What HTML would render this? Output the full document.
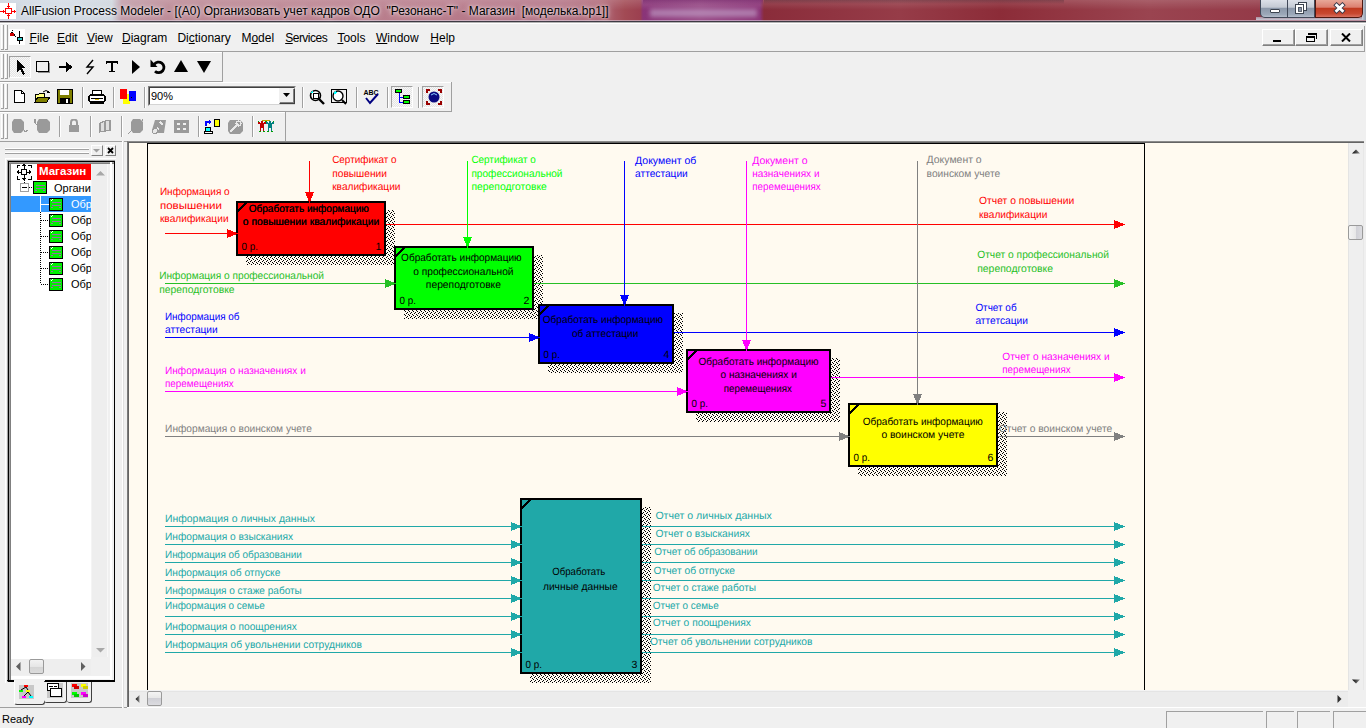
<!DOCTYPE html>
<html><head><meta charset="utf-8">
<style>
html,body{margin:0;padding:0;}
body{width:1366px;height:728px;overflow:hidden;position:relative;background:#F0F0F0;font-family:"Liberation Sans",sans-serif;font-size:12px;color:#000;}
.a{position:absolute;}
.t{position:absolute;white-space:nowrap;line-height:1;}
</style></head><body>
<div class="a" style="left:0px;top:0px;width:1366px;height:22px;background:linear-gradient(90deg,#CCD5DF 0px,#D4DCE6 60px,#CFD6DE 112px,#C09AA6 122px,#BC8894 180px,#BA808E 340px,#B47486 560px,#B06878 600px,#A24A54 625px,#9C4050 640px,#8A3478 643px,#984A86 700px,#8C3478 760px,#8A2C3A 764px,#963C48 900px,#8C2C38 1000px,#9A4450 1150px,#8E3040 1366px);"></div>
<div class="a" style="left:0px;top:0px;width:1366px;height:10px;background:linear-gradient(180deg,rgba(255,255,255,0.15),rgba(255,255,255,0));"></div>
<div class="a" style="left:643px;top:0px;width:120px;height:5px;background:linear-gradient(180deg,rgba(110,30,100,0.5),rgba(110,30,100,0));"></div>
<div class="a" style="left:764px;top:0px;width:300px;height:4px;background:linear-gradient(180deg,rgba(30,20,30,0.25),rgba(30,20,30,0));"></div>
<div class="a" style="left:650px;top:9px;width:107px;height:8px;background:rgba(200,175,210,0.55);filter:blur(2px);"></div>
<div class="a" style="left:0px;top:20px;width:1366px;height:1px;background:rgba(225,220,235,0.55);"></div>
<div class="a" style="left:0px;top:21px;width:1366px;height:1px;background:#3E3A44;"></div>
<div class="a" style="left:0px;top:3px;width:16px;height:16px;background:#fff;"></div>
<svg class="a" style="left:0px;top:3px" width="16" height="16" viewBox="0 0 16 16" shape-rendering="crispEdges"><rect x="5.5" y="5.5" width="6" height="5" fill="none" stroke="#F00" stroke-width="1"/><path d="M8.5 0 V5 M8.5 11 V16 M0 8.5 H5 M12 8.5 H16" stroke="#F00" stroke-width="1"/><path d="M7 3.5 H10 M7 12.5 H10 M3.5 7 V10 M14.5 7 V10" stroke="#F00" stroke-width="1"/></svg>
<div class="t" style="left:21px;top:5px;font-size:12px;color:#000;text-shadow:0 0 6px rgba(255,255,255,0.9),0 0 3px rgba(255,255,255,0.8);">AllFusion Process Modeler - [(A0) Организовать учет кадров ОДО&nbsp; "Резонанс-Т" - Магазин&nbsp; [моделька.bp1]]</div>
<div class="a" style="left:1256px;top:17px;width:110px;height:3px;background:linear-gradient(180deg,rgba(190,200,215,0.6),rgba(205,215,228,0.9));"></div>
<div class="a" style="left:1362px;top:0px;width:4px;height:20px;background:linear-gradient(90deg,#C8D0DC,#8A98A8);"></div>
<div class="a" style="left:1260px;top:0px;width:28px;height:18px;box-sizing:border-box;border:1px solid #404858;border-top:none;border-radius:0 0 0 5px;background:linear-gradient(180deg,#DCE0E8 0%,#C4CAD4 42%,#8C98AA 50%,#9CA8B8 85%,#B4BECC 100%);"></div>
<div class="a" style="left:1288px;top:0px;width:27px;height:18px;box-sizing:border-box;border:1px solid #404858;border-top:none;border-left:none;background:linear-gradient(180deg,#DCE0E8 0%,#C4CAD4 42%,#8C98AA 50%,#9CA8B8 85%,#B4BECC 100%);"></div>
<div class="a" style="left:1315px;top:0px;width:48px;height:18px;box-sizing:border-box;border:1px solid #501810;border-top:none;border-radius:0 0 5px 0;background:linear-gradient(180deg,#E8A898 0%,#DC8070 42%,#C03A20 50%,#C84830 80%,#D87060 100%);"></div>
<div class="a" style="left:1270px;top:9px;width:10px;height:4px;background:#fff;border:1px solid #3C4450;box-sizing:border-box;border-radius:1px;"></div>
<svg class="a" style="left:1294px;top:1px" width="14" height="13" viewBox="0 0 14 13" shape-rendering="crispEdges"><rect x="4.5" y="1.5" width="8" height="8" fill="#fff" stroke="#3C4450" shape-rendering="auto"/><rect x="1.5" y="3.5" width="8" height="9" fill="#fff" stroke="#3C4450" shape-rendering="auto"/><rect x="4" y="6" width="3" height="4" fill="#8A96A8" stroke="#3C4450" stroke-width="0.8"/></svg>
<svg class="a" style="left:1333px;top:2px" width="13" height="12" viewBox="0 0 13 12" shape-rendering="crispEdges"><path d="M3.6 3.2 L9.4 8.8 M9.4 3.2 L3.6 8.8" stroke="#3A3848" stroke-width="4.6" stroke-linecap="square" shape-rendering="auto"/><path d="M3.6 3.2 L9.4 8.8 M9.4 3.2 L3.6 8.8" stroke="#fff" stroke-width="2.8" stroke-linecap="square" shape-rendering="auto"/></svg>
<div class="a" style="left:0px;top:22px;width:1366px;height:30px;background:#F0F0F0;"></div>
<div class="a" style="left:0px;top:22px;width:1366px;height:1px;background:#B4B4B4;"></div>
<div class="a" style="left:0px;top:23px;width:1366px;height:1px;background:#FFFFFF;"></div>
<div class="a" style="left:0px;top:51px;width:1365px;height:1px;background:#A0A0A0;"></div>
<div class="a" style="left:1364px;top:26px;width:1px;height:25px;background:#A0A0A0;"></div>
<div class="a" style="left:1px;top:25px;width:1px;height:25px;background:#fff;"></div><div class="a" style="left:3px;top:25px;width:1px;height:25px;background:#A0A0A0;"></div><div class="a" style="left:1px;top:49px;width:3px;height:1px;background:#A0A0A0;"></div><div class="a" style="left:5px;top:25px;width:1px;height:25px;background:#fff;"></div><div class="a" style="left:7px;top:25px;width:1px;height:25px;background:#A0A0A0;"></div><div class="a" style="left:5px;top:49px;width:3px;height:1px;background:#A0A0A0;"></div>
<svg class="a" style="left:9px;top:29px" width="16" height="16" shape-rendering="crispEdges"><rect x="0" y="0" width="16" height="16" fill="#fff"/><rect x="1" y="4" width="4" height="3" fill="#C00"/><rect x="2" y="3" width="2" height="1" fill="#000"/><rect x="3" y="1" width="1" height="1" fill="#000"/><rect x="5" y="5" width="1" height="2" fill="#000"/><rect x="6" y="7" width="1" height="1" fill="#000"/><rect x="10" y="2" width="1" height="13" fill="#000"/><rect x="8" y="8" width="5" height="3" fill="#33CCCC" stroke="#000" stroke-width="1"/></svg>
<div class="t" style="left:29.6px;top:32px;font-size:12px;"><u>F</u>ile</div>
<div class="t" style="left:57px;top:32px;font-size:12px;"><u>E</u>dit</div>
<div class="t" style="left:86.9px;top:32px;font-size:12px;"><u>V</u>iew</div>
<div class="t" style="left:122px;top:32px;font-size:12px;"><u>D</u>iagram</div>
<div class="t" style="left:177.4px;top:32px;font-size:12px;">Di<u>c</u>tionary</div>
<div class="t" style="left:241.4px;top:32px;font-size:12px;">M<u>o</u>del</div>
<div class="t" style="left:285.2px;top:32px;font-size:12px;"><span style="letter-spacing:-0.5px"><u>S</u>ervices</span></div>
<div class="t" style="left:337.4px;top:32px;font-size:12px;"><u>T</u>ools</div>
<div class="t" style="left:376px;top:32px;font-size:12px;"><u>W</u>indow</div>
<div class="t" style="left:430.3px;top:32px;font-size:12px;"><u>H</u>elp</div>
<div class="a" style="left:1262px;top:29px;width:33px;height:17px;box-sizing:border-box;border:1px solid;border-color:#fff #808080 #808080 #fff;background:#F0F0F0;box-shadow:inset -1px -1px 0 #A0A0A0;"></div>
<div class="a" style="left:1295px;top:29px;width:33px;height:17px;box-sizing:border-box;border:1px solid;border-color:#fff #808080 #808080 #fff;background:#F0F0F0;box-shadow:inset -1px -1px 0 #A0A0A0;"></div>
<div class="a" style="left:1330px;top:29px;width:33px;height:17px;box-sizing:border-box;border:1px solid;border-color:#fff #808080 #808080 #fff;background:#F0F0F0;box-shadow:inset -1px -1px 0 #A0A0A0;"></div>
<div class="a" style="left:1273px;top:40px;width:8px;height:2px;background:#000;"></div>
<div class="a" style="left:1306px;top:36px;width:9px;height:6px;box-sizing:border-box;border:1px solid #000;border-top-width:2px;background:#F0F0F0;"></div>
<div class="a" style="left:1308px;top:33px;width:9px;height:6px;box-sizing:border-box;border:1px solid #000;border-top-width:2px;border-left:none;border-bottom:none;"></div>
<svg class="a" style="left:1341px;top:33px" width="10" height="9"><path d="M1 0.5 L9 8.5 M9 0.5 L1 8.5" stroke="#000" stroke-width="2"/></svg>
<div class="a" style="left:0px;top:52px;width:222px;height:1px;background:#fff;"></div>
<div class="a" style="left:0px;top:81px;width:223px;height:1px;background:#A0A0A0;"></div>
<div class="a" style="left:0px;top:82px;width:451px;height:1px;background:#fff;"></div>
<div class="a" style="left:0px;top:111px;width:452px;height:1px;background:#A0A0A0;"></div>
<div class="a" style="left:0px;top:112px;width:285px;height:1px;background:#fff;"></div>
<div class="a" style="left:222px;top:52px;width:1px;height:30px;background:#A0A0A0;"></div>
<div class="a" style="left:1px;top:54px;width:1px;height:25px;background:#fff;"></div><div class="a" style="left:3px;top:54px;width:1px;height:25px;background:#A0A0A0;"></div><div class="a" style="left:1px;top:78px;width:3px;height:1px;background:#A0A0A0;"></div><div class="a" style="left:5px;top:54px;width:1px;height:25px;background:#fff;"></div><div class="a" style="left:7px;top:54px;width:1px;height:25px;background:#A0A0A0;"></div><div class="a" style="left:5px;top:78px;width:3px;height:1px;background:#A0A0A0;"></div>
<div class="a" style="left:9px;top:56px;width:22px;height:22px;box-sizing:border-box;border:1px solid;border-color:#A0A0A0 #fff #fff #A0A0A0;background:repeating-conic-gradient(#F8F8F8 0 25%,#E4E4E4 0 50%) 0 0/2px 2px;"></div>
<svg class="a" style="left:16px;top:60px" width="12" height="16" viewBox="0 0 12 16" shape-rendering="crispEdges"><path d="M1 0 L1 12 L4 9 L7 15 L9 14 L6 8 L10 8 Z" fill="#000"/></svg>
<svg class="a" style="left:35px;top:60px" width="16" height="14" viewBox="0 0 16 14" shape-rendering="crispEdges"><rect x="1.5" y="1.5" width="12" height="10" fill="none" stroke="#000" stroke-width="1.6"/><rect x="3" y="12" width="12" height="1" fill="#909090"/><rect x="14" y="3" width="1" height="10" fill="#909090"/></svg>
<svg class="a" style="left:58px;top:62px" width="16" height="10" viewBox="0 0 16 10" shape-rendering="crispEdges"><rect x="1" y="4" width="10" height="2" fill="#000"/><path d="M8 0 L15 5 L8 10 Z" fill="#000"/></svg>
<svg class="a" style="left:84px;top:59px" width="12" height="16" viewBox="0 0 12 16" shape-rendering="crispEdges"><path d="M9 1 L3 8 L9 8 L3 15" fill="none" stroke="#000" stroke-width="1.4" shape-rendering="auto"/></svg>
<svg class="a" style="left:105px;top:60px" width="14" height="13" viewBox="0 0 14 13" shape-rendering="crispEdges"><path d="M1 1 H13 V4 H12 V3 H8 V11 H10 V12 H4 V11 H6 V3 H2 V4 H1 Z" fill="#000"/></svg>
<svg class="a" style="left:130px;top:59px" width="12" height="16" viewBox="0 0 12 16" shape-rendering="crispEdges"><path d="M2 1 L10 8 L2 15 Z" fill="#000" shape-rendering="auto"/></svg>
<svg class="a" style="left:149px;top:58px" width="18" height="18" viewBox="0 0 18 18" shape-rendering="crispEdges"><path d="M5.2 6.5 A5.3 5.3 0 1 1 6 13.2" fill="none" stroke="#000" stroke-width="2.8" shape-rendering="auto"/><path d="M1.5 1.5 L1.5 9 L8.5 9 Z" fill="#000" shape-rendering="auto"/></svg>
<svg class="a" style="left:174px;top:60px" width="14" height="13" viewBox="0 0 14 13" shape-rendering="crispEdges"><path d="M7 0 L14 12 L0 12 Z" fill="#000" shape-rendering="auto"/></svg>
<svg class="a" style="left:197px;top:60px" width="14" height="13" viewBox="0 0 14 13" shape-rendering="crispEdges"><path d="M0 1 L14 1 L7 13 Z" fill="#000" shape-rendering="auto"/></svg>
<div class="a" style="left:451px;top:82px;width:1px;height:30px;background:#A0A0A0;"></div>
<div class="a" style="left:1px;top:84px;width:1px;height:25px;background:#fff;"></div><div class="a" style="left:3px;top:84px;width:1px;height:25px;background:#A0A0A0;"></div><div class="a" style="left:1px;top:108px;width:3px;height:1px;background:#A0A0A0;"></div><div class="a" style="left:5px;top:84px;width:1px;height:25px;background:#fff;"></div><div class="a" style="left:7px;top:84px;width:1px;height:25px;background:#A0A0A0;"></div><div class="a" style="left:5px;top:108px;width:3px;height:1px;background:#A0A0A0;"></div>
<svg class="a" style="left:13px;top:89px" width="14" height="16" viewBox="0 0 14 16" shape-rendering="crispEdges"><path d="M1.5 1.5 H8.5 L11.5 4.5 V13.5 H1.5 Z" fill="#fff" stroke="#000" stroke-width="1.2"/><path d="M8.5 1.5 V4.5 H11.5" fill="none" stroke="#000"/></svg>
<svg class="a" style="left:34px;top:89px" width="18" height="16" viewBox="0 0 18 16" shape-rendering="crispEdges"><path d="M1 5 H5 L6 4 H10 V13 H1 Z" fill="#FFFF80" stroke="#000"/><path d="M1 13 L4 8 H16 L13 13 Z" fill="#808000" stroke="#000"/><path d="M9 3 Q12 0 15 3" fill="none" stroke="#000" shape-rendering="auto"/><path d="M14 1 L16 4 L13 4Z" fill="#000"/></svg>
<svg class="a" style="left:57px;top:89px" width="16" height="16" viewBox="0 0 16 16" shape-rendering="crispEdges"><rect x="0.5" y="0.5" width="15" height="14" fill="#808000" stroke="#000"/><rect x="3" y="1" width="9" height="5" fill="#fff"/><rect x="3" y="9" width="10" height="6" fill="#000"/><rect x="9" y="10" width="2" height="4" fill="#fff"/></svg>
<div class="a" style="left:82px;top:87px;width:1px;height:21px;background:#A0A0A0;"></div><div class="a" style="left:83px;top:87px;width:1px;height:21px;background:#fff;"></div>
<svg class="a" style="left:88px;top:89px" width="18" height="16" viewBox="0 0 18 16" shape-rendering="crispEdges"><rect x="4" y="1" width="9" height="5" fill="#fff" stroke="#000"/><rect x="1" y="6" width="16" height="7" rx="2" fill="#fff" stroke="#000" stroke-width="1.3"/><rect x="3" y="9" width="12" height="1" fill="#000"/><rect x="7" y="10" width="4" height="1" fill="#E0C000"/><rect x="2" y="13" width="14" height="2" fill="#000"/></svg>
<div class="a" style="left:113px;top:87px;width:1px;height:21px;background:#A0A0A0;"></div><div class="a" style="left:114px;top:87px;width:1px;height:21px;background:#fff;"></div>
<svg class="a" style="left:119px;top:88px" width="18" height="17" viewBox="0 0 18 17" shape-rendering="crispEdges"><rect x="4" y="6" width="7" height="10" fill="#FF0"/><rect x="1" y="1" width="7" height="10" fill="#F00"/><rect x="10" y="3" width="7" height="10" fill="#00F"/><rect x="12" y="9" width="1" height="1" fill="#000"/></svg>
<div class="a" style="left:144px;top:87px;width:1px;height:21px;background:#A0A0A0;"></div><div class="a" style="left:145px;top:87px;width:1px;height:21px;background:#fff;"></div>
<div class="a" style="left:148px;top:86px;width:148px;height:20px;box-sizing:border-box;border:1px solid;border-color:#808080 #F0F0F0 #F0F0F0 #808080;background:#fff;"></div>
<div class="a" style="left:149px;top:87px;width:146px;height:18px;box-sizing:border-box;border:1px solid;border-color:#404040 #D4D4D4 #D4D4D4 #404040;"></div>
<div class="a" style="left:279px;top:88px;width:16px;height:16px;box-sizing:border-box;border:1px solid;border-color:#F0F0F0 #404040 #404040 #F0F0F0;background:#F0F0F0;box-shadow:inset -1px -1px 0 #808080;"></div>
<svg class="a" style="left:283px;top:93px" width="8" height="5" viewBox="0 0 8 5" shape-rendering="crispEdges"><path d="M0 0 H7 L3.5 4 Z" fill="#000" shape-rendering="auto"/></svg>
<div class="t" style="left:151px;top:91px;font-size:11px;">90%</div>
<div class="a" style="left:302px;top:87px;width:1px;height:21px;background:#A0A0A0;"></div><div class="a" style="left:303px;top:87px;width:1px;height:21px;background:#fff;"></div>
<svg class="a" style="left:309px;top:89px" width="17" height="16" viewBox="0 0 17 16" shape-rendering="crispEdges"><circle cx="6.5" cy="6.5" r="5" fill="#fff" stroke="#000" stroke-width="1.6" shape-rendering="auto"/><rect x="4" y="4" width="5" height="5" fill="none" stroke="#000"/><path d="M2.5 4 L4 2.5" stroke="#0FF"/><path d="M10 10 L15 15" stroke="#000" stroke-width="2.4" shape-rendering="auto"/></svg>
<svg class="a" style="left:331px;top:89px" width="17" height="16" viewBox="0 0 17 16" shape-rendering="crispEdges"><rect x="0.5" y="0.5" width="15" height="13" fill="none" stroke="#000" stroke-width="1.2"/><circle cx="7" cy="7" r="5" fill="#fff" stroke="#000" stroke-width="1.4" shape-rendering="auto"/><path d="M3 5 L5 3" stroke="#0FF" stroke-width="1.5"/><path d="M11 11 L15 15" stroke="#000" stroke-width="2" shape-rendering="auto"/></svg>
<div class="a" style="left:356px;top:87px;width:1px;height:21px;background:#A0A0A0;"></div><div class="a" style="left:357px;top:87px;width:1px;height:21px;background:#fff;"></div>
<svg class="a" style="left:363px;top:88px" width="16" height="17" viewBox="0 0 16 17" shape-rendering="crispEdges"><text x="0.5" y="7" font-size="7" font-weight="bold" font-family="Liberation Sans" fill="#000">ABC</text><path d="M3 10 L7 15 L15 6" fill="none" stroke="#000080" stroke-width="2" shape-rendering="auto"/></svg>
<div class="a" style="left:387px;top:87px;width:1px;height:21px;background:#A0A0A0;"></div><div class="a" style="left:388px;top:87px;width:1px;height:21px;background:#fff;"></div>
<div class="a" style="left:391px;top:86px;width:22px;height:22px;box-sizing:border-box;border:1px solid;border-color:#A0A0A0 #fff #fff #A0A0A0;background:repeating-conic-gradient(#F8F8F8 0 25%,#E4E4E4 0 50%) 0 0/2px 2px;"></div>
<svg class="a" style="left:395px;top:89px" width="16" height="16" viewBox="0 0 16 16" shape-rendering="crispEdges"><rect x="0.5" y="0.5" width="6" height="3" fill="#0F0" stroke="#000"/><rect x="8.5" y="6.5" width="6" height="3" fill="#0F0" stroke="#000"/><rect x="8.5" y="11.5" width="6" height="3" fill="#0F0" stroke="#000"/><path d="M4 4 V13 H8 M4 8 H8" fill="none" stroke="#00F"/></svg>
<div class="a" style="left:418px;top:87px;width:1px;height:21px;background:#A0A0A0;"></div><div class="a" style="left:419px;top:87px;width:1px;height:21px;background:#fff;"></div>
<div class="a" style="left:422px;top:86px;width:22px;height:22px;box-sizing:border-box;border:1px solid;border-color:#A0A0A0 #fff #fff #A0A0A0;background:repeating-conic-gradient(#F8F8F8 0 25%,#E4E4E4 0 50%) 0 0/2px 2px;"></div>
<svg class="a" style="left:426px;top:89px" width="16" height="16" viewBox="0 0 16 16" shape-rendering="crispEdges"><path d="M1 4 V1 H4 M12 1 H15 V4 M15 12 V15 H12 M4 15 H1 V12" fill="none" stroke="#900" stroke-width="1.2"/><circle cx="8" cy="8" r="5.5" fill="#0A0A80" shape-rendering="auto"/><path d="M5 6 Q8 3 11 6" stroke="#8CF" fill="none" shape-rendering="auto"/></svg>
<div class="a" style="left:285px;top:112px;width:1px;height:29px;background:#A0A0A0;"></div>
<div class="a" style="left:1px;top:114px;width:1px;height:25px;background:#fff;"></div><div class="a" style="left:3px;top:114px;width:1px;height:25px;background:#A0A0A0;"></div><div class="a" style="left:1px;top:138px;width:3px;height:1px;background:#A0A0A0;"></div><div class="a" style="left:5px;top:114px;width:1px;height:25px;background:#fff;"></div><div class="a" style="left:7px;top:114px;width:1px;height:25px;background:#A0A0A0;"></div><div class="a" style="left:5px;top:138px;width:3px;height:1px;background:#A0A0A0;"></div>
<svg class="a" style="left:12px;top:118px" width="17" height="17" viewBox="0 0 17 17" shape-rendering="crispEdges"><path d="M2 1 H9 L12 4 V12 L9 15 H2 L0 12 V4 Z" fill="#9A9A9A" shape-rendering="auto"/><path d="M11 10 L13 14 L16 12" fill="none" stroke="#9A9A9A" stroke-width="1.2"/></svg>
<svg class="a" style="left:34px;top:118px" width="17" height="17" viewBox="0 0 17 17" shape-rendering="crispEdges"><path d="M5 1 H13 L16 4 V12 L13 15 H5 L3 12 V4 Z" fill="#9A9A9A" shape-rendering="auto"/><path d="M1 1 V5 L3 7" fill="none" stroke="#9A9A9A" stroke-width="1.2"/></svg>
<div class="a" style="left:59px;top:116px;width:1px;height:21px;background:#A0A0A0;"></div><div class="a" style="left:60px;top:116px;width:1px;height:21px;background:#fff;"></div>
<svg class="a" style="left:68px;top:119px" width="12" height="14" viewBox="0 0 12 14" shape-rendering="crispEdges"><path d="M3 6 V3.5 A3 3 0 0 1 9 3.5 V6" fill="none" stroke="#9A9A9A" stroke-width="2" shape-rendering="auto"/><rect x="1" y="6" width="10" height="7" fill="#9A9A9A"/></svg>
<div class="a" style="left:90px;top:116px;width:1px;height:21px;background:#A0A0A0;"></div><div class="a" style="left:91px;top:116px;width:1px;height:21px;background:#fff;"></div>
<svg class="a" style="left:99px;top:120px" width="13" height="13" viewBox="0 0 13 13" shape-rendering="crispEdges"><path d="M1 3 L6 1 V11 L1 12 Z M6 1 L11 0 V10 L6 11" fill="#E0E0E0" stroke="#9A9A9A" stroke-width="1.2"/></svg>
<div class="a" style="left:121px;top:116px;width:1px;height:21px;background:#A0A0A0;"></div><div class="a" style="left:122px;top:116px;width:1px;height:21px;background:#fff;"></div>
<svg class="a" style="left:127px;top:118px" width="18" height="17" viewBox="0 0 18 17" shape-rendering="crispEdges"><path d="M6 1 H13 L16 4 V12 L13 15 H6 L4 12 V4 Z" fill="#9A9A9A" shape-rendering="auto"/><path d="M1 16 L5 12 M16 1 L14 5" stroke="#9A9A9A" stroke-width="1.2"/></svg>
<svg class="a" style="left:151px;top:118px" width="17" height="17" viewBox="0 0 17 17" shape-rendering="crispEdges"><path d="M4 2 H15 L13 15 H4 L1 12 Z" fill="#9A9A9A" shape-rendering="auto"/><path d="M9 4 L12 7 M6 10 L8 12" stroke="#E8E8E8" stroke-width="1.5"/><circle cx="4" cy="13" r="2.5" fill="#E8E8E8" stroke="#9A9A9A"/></svg>
<svg class="a" style="left:174px;top:120px" width="15" height="14" viewBox="0 0 15 14" shape-rendering="crispEdges"><rect x="0" y="0" width="15" height="13" fill="#9A9A9A"/><rect x="3" y="3" width="3" height="2" fill="#F0F0F0"/><rect x="9" y="3" width="3" height="2" fill="#F0F0F0"/><rect x="3" y="8" width="3" height="2" fill="#F0F0F0"/><rect x="9" y="8" width="3" height="2" fill="#F0F0F0"/></svg>
<div class="a" style="left:198px;top:116px;width:1px;height:21px;background:#A0A0A0;"></div><div class="a" style="left:199px;top:116px;width:1px;height:21px;background:#fff;"></div>
<svg class="a" style="left:204px;top:118px" width="17" height="17" viewBox="0 0 17 17" shape-rendering="crispEdges"><rect x="10.5" y="1.5" width="5" height="7" rx="1" fill="#FF0" stroke="#000"/><path d="M2 8 V4 H6" fill="none" stroke="#00F" stroke-width="2"/><path d="M5 2 L8 4 L5 6Z" fill="#00F"/><rect x="1.5" y="9.5" width="5" height="4" fill="#0FF" stroke="#000"/><rect x="0.5" y="13.5" width="8" height="2" fill="#fff" stroke="#000"/></svg>
<svg class="a" style="left:227px;top:119px" width="17" height="16" viewBox="0 0 17 16" shape-rendering="crispEdges"><path d="M3 1 H13 L16 4 V12 L13 15 H3 L1 12 V4 Z" fill="#9A9A9A" shape-rendering="auto"/><path d="M3 13 L11 5" stroke="#E8E8E8" stroke-width="2"/><circle cx="11.5" cy="4.5" r="2.5" fill="none" stroke="#E8E8E8" stroke-width="1.2"/></svg>
<div class="a" style="left:252px;top:116px;width:1px;height:21px;background:#A0A0A0;"></div><div class="a" style="left:253px;top:116px;width:1px;height:21px;background:#fff;"></div>
<svg class="a" style="left:258px;top:120px" width="17" height="13" viewBox="0 0 17 13" shape-rendering="crispEdges"><rect x="3" y="1" width="2" height="2" fill="#C00000"/><rect x="2" y="3" width="4" height="5" fill="#C00000"/><rect x="0" y="2" width="2" height="2" fill="#C00000"/><rect x="6" y="2" width="2" height="2" fill="#C00000"/><rect x="2" y="8" width="1" height="3" fill="#C00000"/><rect x="5" y="8" width="1" height="3" fill="#C00000"/><rect x="1" y="11" width="2" height="1" fill="#00A000"/><rect x="5" y="11" width="2" height="1" fill="#00A000"/><rect x="0" y="1" width="1" height="1" fill="#00A000"/><rect x="7" y="1" width="1" height="1" fill="#00A000"/><rect x="11" y="1" width="2" height="2" fill="#008080"/><rect x="10" y="3" width="4" height="5" fill="#008080"/><rect x="8" y="2" width="2" height="2" fill="#008080"/><rect x="14" y="2" width="2" height="2" fill="#008080"/><rect x="10" y="8" width="1" height="3" fill="#008080"/><rect x="13" y="8" width="1" height="3" fill="#008080"/><rect x="9" y="11" width="2" height="1" fill="#00A000"/><rect x="13" y="11" width="2" height="1" fill="#00A000"/><rect x="8" y="1" width="1" height="1" fill="#00A000"/><rect x="15" y="1" width="1" height="1" fill="#00A000"/><rect x="4" y="0" width="8" height="1" fill="#C0A000"/></svg>
<div class="a" style="left:0px;top:141px;width:128px;height:567px;background:#F0F0F0;"></div>
<div class="a" style="left:0px;top:141px;width:128px;height:1px;background:#A0A0A0;"></div>
<div class="a" style="left:5px;top:148px;width:84px;height:1px;background:#fff;"></div>
<div class="a" style="left:5px;top:149px;width:84px;height:1px;background:#A0A0A0;"></div>
<div class="a" style="left:5px;top:152px;width:84px;height:1px;background:#fff;"></div>
<div class="a" style="left:5px;top:153px;width:84px;height:1px;background:#A0A0A0;"></div>
<div class="a" style="left:91px;top:145px;width:12px;height:11px;box-sizing:border-box;border:1px solid;border-color:#fff #808080 #808080 #fff;background:#F0F0F0;"></div>
<svg class="a" style="left:93px;top:149px" width="8" height="4" viewBox="0 0 8 4" shape-rendering="crispEdges"><path d="M0 0 H7 L3.5 3.5Z" fill="#A0A0A0" shape-rendering="auto"/></svg>
<div class="a" style="left:105px;top:145px;width:11px;height:11px;box-sizing:border-box;border:1px solid;border-color:#fff #808080 #808080 #fff;background:#F0F0F0;"></div>
<svg class="a" style="left:107px;top:147px" width="8" height="7" viewBox="0 0 8 7" shape-rendering="crispEdges"><path d="M1 1 L6 6 M6 1 L1 6" stroke="#000" stroke-width="1.8" shape-rendering="auto"/></svg>
<div class="a" style="left:5px;top:158px;width:111px;height:525px;box-sizing:border-box;border-left:1px solid #fff;border-top:1px solid #fff;"></div>
<div class="a" style="left:7px;top:160px;width:108px;height:522px;box-sizing:border-box;border-left:1px solid #A0A0A0;border-top:1px solid #A0A0A0;"></div>
<div class="a" style="left:8px;top:161px;width:107px;height:521px;box-sizing:border-box;border:1px solid #000;background:#F0F0F0;"></div>
<div class="a" style="left:9px;top:162px;width:2px;height:518px;background:linear-gradient(90deg,#A0A0A0 0 1px,#808080 1px 2px);"></div>
<div class="a" style="left:9px;top:162px;width:105px;height:2px;background:linear-gradient(180deg,#A0A0A0 0 1px,#808080 1px 2px);"></div>
<div class="a" style="left:110px;top:162px;width:2px;height:518px;background:#fff;"></div>
<div class="a" style="left:11px;top:676px;width:99px;height:3px;background:#fff;"></div>
<div class="a" style="left:11px;top:164px;width:80px;height:495px;background:#fff;"></div>
<div class="a" style="left:91px;top:164px;width:17px;height:493px;background:#EEEEEE;box-shadow:inset 1px 0 0 #F4F4F4,inset -1px 0 0 #F8F8F8;"></div>
<svg class="a" style="left:96px;top:171px" width="9" height="5" viewBox="0 0 9 5" shape-rendering="crispEdges"><path d="M0 4.5 L4.5 0 L9 4.5Z" fill="#A8A8A8" shape-rendering="auto"/></svg>
<svg class="a" style="left:96px;top:648px" width="9" height="5" viewBox="0 0 9 5" shape-rendering="crispEdges"><path d="M0 0 L9 0 L4.5 4.5Z" fill="#A8A8A8" shape-rendering="auto"/></svg>
<div class="a" style="left:11px;top:659px;width:80px;height:16px;background:#EEEEEE;"></div>
<svg class="a" style="left:16px;top:662px" width="5" height="9" viewBox="0 0 5 9" shape-rendering="crispEdges"><path d="M4.5 0 L0 4.5 L4.5 9Z" fill="#606060" shape-rendering="auto"/></svg>
<svg class="a" style="left:81px;top:662px" width="5" height="9" viewBox="0 0 5 9" shape-rendering="crispEdges"><path d="M0 0 L4.5 4.5 L0 9Z" fill="#606060" shape-rendering="auto"/></svg>
<div class="a" style="left:29px;top:659px;width:15px;height:15px;box-sizing:border-box;border:1px solid #9A9A9A;border-radius:2px;background:linear-gradient(180deg,#F2F2F2 0%,#E6E6E6 50%,#D4D4D4 51%,#DCDCDC 100%);"></div>
<div class="a" style="left:91px;top:657px;width:17px;height:19px;background:#F0F0F0;"></div>
<svg class="a" style="left:16px;top:164px" width="17" height="16" viewBox="0 0 17 16" shape-rendering="crispEdges"><path d="M1 4 V1 H4 M12 1 H15 V4 M15 12 V15 H12 M4 15 H1 V12" fill="none" stroke="#000"/><rect x="5.5" y="5.5" width="5" height="5" fill="#fff" stroke="#000"/><path d="M8 0 V5 M8 11 V16 M2 8 H5 M11 8 H15" stroke="#000"/><path d="M6 2 L8 0 L10 2 M6 14 L8 16 L10 14 M3 6 L1 8 L3 10 M13 6 L15 8 L13 10" fill="#000" stroke="#000"/></svg>
<div class="a" style="left:37px;top:164px;width:54px;height:16px;background:#FF0000;"></div>
<div class="t" style="left:39px;top:166px;font-size:11.5px;font-weight:bold;color:#fff;">Магазин</div>
<div class="a" style="left:20px;top:183px;width:9px;height:9px;box-sizing:border-box;border:1px solid #A0A0A0;background:#fff;"></div>
<div class="a" style="left:22px;top:187px;width:5px;height:1px;background:#000;"></div>
<div class="a" style="left:29px;top:187px;width:1px;height:1px;background:#000;"></div>
<div class="a" style="left:31px;top:187px;width:1px;height:1px;background:#000;"></div>
<div class="a" style="left:24px;top:180px;width:1px;height:3px;background:repeating-linear-gradient(180deg,#000 0 1px,transparent 1px 2px);"></div>
<svg class="a" style="left:33px;top:181px" width="14" height="13" viewBox="0 0 14 13" shape-rendering="crispEdges"><rect x="0.5" y="0.5" width="13" height="12" fill="#00F000" stroke="#000"/><path d="M3 3.5 V4.5 H5 V3.5 M5 4.5 H7 V3.5 M8 3.5 V4.5 H11 V3.5 M3 6.5 V7.5 H6 V6.5 M7 6.5 V7.5 H9 V6.5 M9 7.5 H11 V6.5 M2 9.5 H4 M10 9.5 H12" fill="none" stroke="#9868A8"/></svg>
<div class="a" style="left:11px;top:196px;width:80px;height:16px;background:#3399FF;"></div>
<div class="a" style="left:12px;top:164px;width:79px;height:495px;overflow:hidden"><div class="t" style="left:42px;top:19px;font-size:11px;">Органи</div><div class="t" style="left:59px;top:35px;font-size:11px;color:#fff">Обр</div><div class="t" style="left:59px;top:51px;font-size:11px;color:#000">Обр</div><div class="t" style="left:59px;top:67px;font-size:11px;color:#000">Обр</div><div class="t" style="left:59px;top:83px;font-size:11px;color:#000">Обр</div><div class="t" style="left:59px;top:99px;font-size:11px;color:#000">Обр</div><div class="t" style="left:59px;top:115px;font-size:11px;color:#000">Обр</div></div>
<svg class="a" style="left:49px;top:198px" width="14" height="13" viewBox="0 0 14 13" shape-rendering="crispEdges"><rect x="0.5" y="0.5" width="13" height="12" fill="#00F000" stroke="#000"/><path d="M3 3.5 V4.5 H5 V3.5 M5 4.5 H7 V3.5 M8 3.5 V4.5 H11 V3.5 M3 6.5 V7.5 H6 V6.5 M7 6.5 V7.5 H9 V6.5 M9 7.5 H11 V6.5 M2 9.5 H4 M10 9.5 H12" fill="none" stroke="#9868A8"/><path d="M1.5 3.5 L3.5 1.5" stroke="#fff"/><rect x="1" y="1" width="1" height="1" fill="#9868A8"/></svg>
<div class="a" style="left:41px;top:204px;width:8px;height:1px;background:#fff;"></div>
<svg class="a" style="left:49px;top:214px" width="14" height="13" viewBox="0 0 14 13" shape-rendering="crispEdges"><rect x="0.5" y="0.5" width="13" height="12" fill="#00F000" stroke="#000"/><path d="M3 3.5 V4.5 H5 V3.5 M5 4.5 H7 V3.5 M8 3.5 V4.5 H11 V3.5 M3 6.5 V7.5 H6 V6.5 M7 6.5 V7.5 H9 V6.5 M9 7.5 H11 V6.5 M2 9.5 H4 M10 9.5 H12" fill="none" stroke="#9868A8"/><path d="M1.5 3.5 L3.5 1.5" stroke="#fff"/><rect x="1" y="1" width="1" height="1" fill="#9868A8"/></svg>
<div class="a" style="left:41px;top:220px;width:8px;height:1px;background:repeating-linear-gradient(90deg,#000 0 1px,transparent 1px 2px);"></div>
<svg class="a" style="left:49px;top:230px" width="14" height="13" viewBox="0 0 14 13" shape-rendering="crispEdges"><rect x="0.5" y="0.5" width="13" height="12" fill="#00F000" stroke="#000"/><path d="M3 3.5 V4.5 H5 V3.5 M5 4.5 H7 V3.5 M8 3.5 V4.5 H11 V3.5 M3 6.5 V7.5 H6 V6.5 M7 6.5 V7.5 H9 V6.5 M9 7.5 H11 V6.5 M2 9.5 H4 M10 9.5 H12" fill="none" stroke="#9868A8"/><path d="M1.5 3.5 L3.5 1.5" stroke="#fff"/><rect x="1" y="1" width="1" height="1" fill="#9868A8"/></svg>
<div class="a" style="left:41px;top:236px;width:8px;height:1px;background:repeating-linear-gradient(90deg,#000 0 1px,transparent 1px 2px);"></div>
<svg class="a" style="left:49px;top:246px" width="14" height="13" viewBox="0 0 14 13" shape-rendering="crispEdges"><rect x="0.5" y="0.5" width="13" height="12" fill="#00F000" stroke="#000"/><path d="M3 3.5 V4.5 H5 V3.5 M5 4.5 H7 V3.5 M8 3.5 V4.5 H11 V3.5 M3 6.5 V7.5 H6 V6.5 M7 6.5 V7.5 H9 V6.5 M9 7.5 H11 V6.5 M2 9.5 H4 M10 9.5 H12" fill="none" stroke="#9868A8"/><path d="M1.5 3.5 L3.5 1.5" stroke="#fff"/><rect x="1" y="1" width="1" height="1" fill="#9868A8"/></svg>
<div class="a" style="left:41px;top:252px;width:8px;height:1px;background:repeating-linear-gradient(90deg,#000 0 1px,transparent 1px 2px);"></div>
<svg class="a" style="left:49px;top:262px" width="14" height="13" viewBox="0 0 14 13" shape-rendering="crispEdges"><rect x="0.5" y="0.5" width="13" height="12" fill="#00F000" stroke="#000"/><path d="M3 3.5 V4.5 H5 V3.5 M5 4.5 H7 V3.5 M8 3.5 V4.5 H11 V3.5 M3 6.5 V7.5 H6 V6.5 M7 6.5 V7.5 H9 V6.5 M9 7.5 H11 V6.5 M2 9.5 H4 M10 9.5 H12" fill="none" stroke="#9868A8"/><path d="M1.5 3.5 L3.5 1.5" stroke="#fff"/><rect x="1" y="1" width="1" height="1" fill="#9868A8"/></svg>
<div class="a" style="left:41px;top:268px;width:8px;height:1px;background:repeating-linear-gradient(90deg,#000 0 1px,transparent 1px 2px);"></div>
<svg class="a" style="left:49px;top:278px" width="14" height="13" viewBox="0 0 14 13" shape-rendering="crispEdges"><rect x="0.5" y="0.5" width="13" height="12" fill="#00F000" stroke="#000"/><path d="M3 3.5 V4.5 H5 V3.5 M5 4.5 H7 V3.5 M8 3.5 V4.5 H11 V3.5 M3 6.5 V7.5 H6 V6.5 M7 6.5 V7.5 H9 V6.5 M9 7.5 H11 V6.5 M2 9.5 H4 M10 9.5 H12" fill="none" stroke="#9868A8"/><path d="M1.5 3.5 L3.5 1.5" stroke="#fff"/><rect x="1" y="1" width="1" height="1" fill="#9868A8"/></svg>
<div class="a" style="left:41px;top:284px;width:8px;height:1px;background:repeating-linear-gradient(90deg,#000 0 1px,transparent 1px 2px);"></div>
<div class="a" style="left:40px;top:196px;width:1px;height:88px;background:repeating-linear-gradient(180deg,#000 0 1px,transparent 1px 2px);"></div>
<div class="a" style="left:40px;top:196px;width:1px;height:16px;background:#fff;"></div>
<div class="a" style="left:14px;top:681px;width:31px;height:24px;box-sizing:border-box;border-left:1px solid #fff;border-right:1px solid #404040;border-bottom:1px solid #404040;background:#F0F0F0;border-radius:0 0 3px 3px;"></div>
<div class="a" style="left:7px;top:680px;width:7px;height:1px;background:#000;"></div>
<div class="a" style="left:45px;top:680px;width:70px;height:2px;background:#000;"></div>
<div class="a" style="left:44px;top:682px;width:23px;height:21px;box-sizing:border-box;border-right:1px solid #404040;border-bottom:1px solid #404040;background:#F0F0F0;border-radius:0 0 3px 3px;"></div>
<div class="a" style="left:67px;top:682px;width:25px;height:21px;box-sizing:border-box;border-right:1px solid #404040;border-bottom:1px solid #404040;background:#F0F0F0;border-radius:0 0 3px 3px;"></div>
<svg class="a" style="left:18px;top:684px" width="17" height="16" viewBox="0 0 17 16" shape-rendering="crispEdges"><rect x="1" y="1" width="15" height="14" fill="#C8C8C8"/><rect x="6" y="1" width="4" height="2" fill="#F00"/><rect x="1" y="6" width="4" height="2" fill="#0F0"/><rect x="8" y="6" width="4" height="2" fill="#FF0"/><rect x="4" y="12" width="4" height="2" fill="#F0F"/><rect x="11" y="12" width="4" height="2" fill="#0FF"/><path d="M8 3 L3 6 M8 3 L10 6 M10 8 L6 12 M10 8 L13 12" stroke="#000" shape-rendering="auto"/></svg>
<svg class="a" style="left:47px;top:683px" width="16" height="15" viewBox="0 0 16 15" shape-rendering="crispEdges"><rect x="0" y="0" width="16" height="15" fill="#C8C8C8"/><rect x="0.5" y="0.5" width="11" height="7" fill="#fff" stroke="#000"/><rect x="3.5" y="5.5" width="11" height="8" fill="#fff" stroke="#000"/><path d="M2 3 H6 M7 3 H10" stroke="#000"/></svg>
<svg class="a" style="left:71px;top:683px" width="17" height="15" viewBox="0 0 17 15" shape-rendering="crispEdges"><rect x="0" y="0" width="17" height="15" fill="#C8C8C8"/><rect x="1" y="1" width="5" height="3" fill="#F00"/><rect x="3" y="3" width="5" height="3" fill="#C00"/><rect x="10" y="1" width="5" height="3" fill="#FF0"/><rect x="12" y="3" width="5" height="3" fill="#CC0"/><rect x="1" y="9" width="5" height="3" fill="#0F0"/><rect x="3" y="11" width="5" height="3" fill="#0C0"/><rect x="10" y="9" width="5" height="3" fill="#F0F"/><rect x="12" y="11" width="5" height="3" fill="#C0C"/></svg>
<div class="a" style="left:0px;top:707px;width:128px;height:1px;background:#A0A0A0;"></div>
<div class="a" style="left:122px;top:141px;width:1px;height:567px;background:#fff;"></div>
<div class="a" style="left:123px;top:141px;width:1px;height:567px;background:#E0E0E0;"></div>
<div class="a" style="left:127px;top:141px;width:239px;height:567px;background:#F0F0F0;"></div>
<div class="a" style="left:127px;top:141px;width:1238px;height:1px;background:#8A8A8A;"></div>
<div class="a" style="left:128px;top:142px;width:1237px;height:1px;background:#646464;"></div>
<div class="a" style="left:127px;top:141px;width:1px;height:567px;background:#7A7A7A;"></div>
<div class="a" style="left:128px;top:142px;width:1px;height:565px;background:#646464;"></div>
<div class="a" style="left:1364px;top:141px;width:2px;height:567px;background:#F0F0F0;"></div>
<div class="a" style="left:129px;top:143px;width:1219px;height:547px;background:#FFFAF0;"></div>
<div class="a" style="left:1348px;top:143px;width:16px;height:547px;background:#EFEFEF;box-shadow:inset 1px 0 0 #E4E4E4,inset -1px 0 0 #E8E8E8;"></div>
<svg class="a" style="left:1352px;top:149px" width="8" height="5" viewBox="0 0 8 5" shape-rendering="crispEdges"><defs><linearGradient id="ga" x1="0" x2="1"><stop offset="0" stop-color="#000"/><stop offset="1" stop-color="#909090"/></linearGradient></defs><path d="M0 4.5 L4 0.5 L8 4.5Z" fill="url(#ga)" shape-rendering="auto"/></svg>
<svg class="a" style="left:1352px;top:679px" width="8" height="5" viewBox="0 0 8 5" shape-rendering="crispEdges"><path d="M0 0.5 L8 0.5 L4 4.5Z" fill="url(#ga)" shape-rendering="auto"/></svg>
<div class="a" style="left:1348px;top:225px;width:15px;height:15px;box-sizing:border-box;border:1px solid #9A9A9A;border-radius:2px;background:linear-gradient(90deg,#F4F4F4 0%,#E8E8E8 50%,#D0D0D6 51%,#DCDCE0 100%);"></div>
<div class="a" style="left:129px;top:690px;width:1219px;height:17px;background:linear-gradient(180deg,#F4F4F4 0 1px,#E4E4E4 1px 2px,#ECECEC 2px);"></div>
<svg class="a" style="left:135px;top:695px" width="5" height="8" viewBox="0 0 5 8" shape-rendering="crispEdges"><path d="M4.5 0 L0.5 4 L4.5 8Z" fill="url(#ga)" shape-rendering="auto"/></svg>
<svg class="a" style="left:1337px;top:695px" width="5" height="8" viewBox="0 0 5 8" shape-rendering="crispEdges"><path d="M0.5 0 L4.5 4 L0.5 8Z" fill="#303030" shape-rendering="auto"/></svg>
<div class="a" style="left:147px;top:691px;width:15px;height:15px;box-sizing:border-box;border:1px solid #9A9A9A;border-radius:2px;background:linear-gradient(180deg,#F4F4F4 0%,#E8E8E8 45%,#D0D0D6 50%,#DCDCE0 100%);"></div>
<div class="a" style="left:1348px;top:690px;width:16px;height:17px;background:#F0F0F0;"></div>
<div class="a" style="left:127px;top:707px;width:1239px;height:1px;background:#fff;"></div>
<div class="a" style="left:0px;top:708px;width:1366px;height:20px;background:#F0F0F0;"></div>
<div class="t" style="left:2px;top:714px;font-size:11px;">Ready</div>
<div class="a" style="left:1166px;top:711px;width:97px;height:17px;box-sizing:border-box;border-top:1px solid #A0A0A0;border-left:1px solid #A0A0A0;"></div>
<div class="a" style="left:1266px;top:711px;width:28px;height:17px;box-sizing:border-box;border-top:1px solid #A0A0A0;border-left:1px solid #A0A0A0;"></div>
<div class="a" style="left:1297px;top:711px;width:33px;height:17px;box-sizing:border-box;border-top:1px solid #A0A0A0;border-left:1px solid #A0A0A0;"></div>
<div class="a" style="left:1333px;top:711px;width:33px;height:17px;box-sizing:border-box;border-top:1px solid #A0A0A0;border-left:1px solid #A0A0A0;"></div>
<svg width="1366" height="728" viewBox="0 0 1366 728" style="position:absolute;left:0;top:0" shape-rendering="crispEdges">
<defs><pattern id="dith" width="4" height="4" patternUnits="userSpaceOnUse"><rect x="3" y="0" width="1" height="1" fill="#000"/><rect x="2" y="1" width="1" height="1" fill="#000"/><rect x="0" y="2" width="1" height="1" fill="#000"/><rect x="1" y="3" width="1" height="1" fill="#000"/></pattern><clipPath id="cv"><rect x="129" y="143" width="1219" height="547"/></clipPath></defs>
<g clip-path="url(#cv)" font-family="Liberation Sans, sans-serif" text-rendering="geometricPrecision">
<rect x="147" y="143" width="1" height="560" fill="#000"/>
<rect x="1144" y="143" width="1" height="560" fill="#000"/>
<rect x="147" y="143" width="998" height="1" fill="#000"/>
<rect x="246" y="210" width="149" height="55" fill="url(#dith)"/>
<rect x="404" y="255" width="139" height="64" fill="url(#dith)"/>
<rect x="548" y="313" width="135" height="60" fill="url(#dith)"/>
<rect x="696" y="358" width="144" height="64" fill="url(#dith)"/>
<rect x="858" y="412" width="149" height="64" fill="url(#dith)"/>
<rect x="530" y="507" width="121" height="176" fill="url(#dith)"/>
<rect x="165" y="233" width="71" height="1" fill="#FF0000"/>
<polygon points="227,229 238,233.5 227,238" fill="#FF0000"/>
<rect x="309" y="161" width="1" height="40" fill="#FF0000"/>
<polygon points="305,192 309.5,203 314,192" fill="#FF0000"/>
<rect x="386" y="224" width="739" height="1" fill="#FF0000"/>
<polygon points="1114,220 1125,224.5 1114,229" fill="#FF0000"/>
<rect x="165" y="283" width="229" height="1" fill="#26BF26"/>
<polygon points="385,279 396,283.5 385,288" fill="#26BF26"/>
<rect x="467" y="161" width="1" height="85" fill="#00FF00"/>
<polygon points="463,237 467.5,248 472,237" fill="#00FF00"/>
<rect x="534" y="283" width="591" height="1" fill="#26BF26"/>
<polygon points="1114,279 1125,283.5 1114,288" fill="#26BF26"/>
<rect x="165" y="337" width="373" height="1" fill="#0000FF"/>
<polygon points="529,333 540,337.5 529,342" fill="#0000FF"/>
<rect x="624" y="161" width="1" height="143" fill="#0000FF"/>
<polygon points="620,295 624.5,306 629,295" fill="#0000FF"/>
<rect x="674" y="332" width="451" height="1" fill="#0000FF"/>
<polygon points="1114,328 1125,332.5 1114,337" fill="#0000FF"/>
<rect x="165" y="391" width="521" height="1" fill="#FF00FF"/>
<polygon points="677,387 688,391.5 677,396" fill="#FF00FF"/>
<rect x="746" y="161" width="1" height="188" fill="#FF00FF"/>
<polygon points="742,340 746.5,351 751,340" fill="#FF00FF"/>
<rect x="831" y="377" width="294" height="1" fill="#FF00FF"/>
<polygon points="1114,373 1125,377.5 1114,382" fill="#FF00FF"/>
<rect x="165" y="436" width="683" height="1" fill="#808080"/>
<polygon points="839,432 850,436.5 839,441" fill="#808080"/>
<rect x="917" y="161" width="1" height="242" fill="#808080"/>
<polygon points="913,394 917.5,405 922,394" fill="#808080"/>
<rect x="998" y="436" width="127" height="1" fill="#808080"/>
<polygon points="1114,432 1125,436.5 1114,441" fill="#808080"/>
<rect x="165" y="526" width="355" height="1" fill="#20A8A8"/>
<polygon points="511,522 522,526.5 511,531" fill="#20A8A8"/>
<rect x="642" y="526" width="483" height="1" fill="#20A8A8"/>
<polygon points="1114,522 1125,526.5 1114,531" fill="#20A8A8"/>
<rect x="165" y="544" width="355" height="1" fill="#20A8A8"/>
<polygon points="511,540 522,544.5 511,549" fill="#20A8A8"/>
<rect x="642" y="544" width="483" height="1" fill="#20A8A8"/>
<polygon points="1114,540 1125,544.5 1114,549" fill="#20A8A8"/>
<rect x="165" y="562" width="355" height="1" fill="#20A8A8"/>
<polygon points="511,558 522,562.5 511,567" fill="#20A8A8"/>
<rect x="642" y="562" width="483" height="1" fill="#20A8A8"/>
<polygon points="1114,558 1125,562.5 1114,567" fill="#20A8A8"/>
<rect x="165" y="580" width="355" height="1" fill="#20A8A8"/>
<polygon points="511,576 522,580.5 511,585" fill="#20A8A8"/>
<rect x="642" y="580" width="483" height="1" fill="#20A8A8"/>
<polygon points="1114,576 1125,580.5 1114,585" fill="#20A8A8"/>
<rect x="165" y="598" width="355" height="1" fill="#20A8A8"/>
<polygon points="511,594 522,598.5 511,603" fill="#20A8A8"/>
<rect x="642" y="598" width="483" height="1" fill="#20A8A8"/>
<polygon points="1114,594 1125,598.5 1114,603" fill="#20A8A8"/>
<rect x="165" y="616" width="355" height="1" fill="#20A8A8"/>
<polygon points="511,612 522,616.5 511,621" fill="#20A8A8"/>
<rect x="642" y="616" width="483" height="1" fill="#20A8A8"/>
<polygon points="1114,612 1125,616.5 1114,621" fill="#20A8A8"/>
<rect x="165" y="634" width="355" height="1" fill="#20A8A8"/>
<polygon points="511,630 522,634.5 511,639" fill="#20A8A8"/>
<rect x="642" y="634" width="483" height="1" fill="#20A8A8"/>
<polygon points="1114,630 1125,634.5 1114,639" fill="#20A8A8"/>
<rect x="165" y="652" width="355" height="1" fill="#20A8A8"/>
<polygon points="511,648 522,652.5 511,657" fill="#20A8A8"/>
<rect x="642" y="652" width="483" height="1" fill="#20A8A8"/>
<polygon points="1114,648 1125,652.5 1114,657" fill="#20A8A8"/>
<rect x="236" y="201" width="150" height="55" fill="#000"/><rect x="238" y="203" width="146" height="51" fill="#FF0000"/><polygon points="238,209.5 244.5,203 247.5,203 238,212.5" fill="#000"/>
<rect x="394" y="246" width="140" height="64" fill="#000"/><rect x="396" y="248" width="136" height="60" fill="#00FF00"/><polygon points="396,254.5 402.5,248 405.5,248 396,257.5" fill="#000"/>
<rect x="538" y="304" width="136" height="60" fill="#000"/><rect x="540" y="306" width="132" height="56" fill="#0000FF"/><polygon points="540,312.5 546.5,306 549.5,306 540,315.5" fill="#000"/>
<rect x="686" y="349" width="145" height="64" fill="#000"/><rect x="688" y="351" width="141" height="60" fill="#FF00FF"/><polygon points="688,357.5 694.5,351 697.5,351 688,360.5" fill="#000"/>
<rect x="848" y="403" width="150" height="64" fill="#000"/><rect x="850" y="405" width="146" height="60" fill="#FFFF00"/><polygon points="850,411.5 856.5,405 859.5,405 850,414.5" fill="#000"/>
<rect x="520" y="498" width="122" height="176" fill="#000"/><rect x="522" y="500" width="118" height="172" fill="#20A8A8"/><polygon points="522,506.5 528.5,500 531.5,500 522,509.5" fill="#000"/>
<rect x="236" y="233" width="2" height="1" fill="#FF0000"/>
<rect x="394" y="283" width="2" height="1" fill="#26BF26"/>
<rect x="538" y="337" width="2" height="1" fill="#0000FF"/>
<rect x="686" y="391" width="2" height="1" fill="#FF00FF"/>
<rect x="848" y="436" width="2" height="1" fill="#808080"/>
<rect x="520" y="526" width="2" height="1" fill="#20A8A8"/>
<rect x="520" y="544" width="2" height="1" fill="#20A8A8"/>
<rect x="520" y="562" width="2" height="1" fill="#20A8A8"/>
<rect x="520" y="580" width="2" height="1" fill="#20A8A8"/>
<rect x="520" y="598" width="2" height="1" fill="#20A8A8"/>
<rect x="520" y="616" width="2" height="1" fill="#20A8A8"/>
<rect x="520" y="634" width="2" height="1" fill="#20A8A8"/>
<rect x="520" y="652" width="2" height="1" fill="#20A8A8"/>
<rect x="309" y="201" width="1" height="2" fill="#FF0000"/>
<rect x="467" y="246" width="1" height="2" fill="#00FF00"/>
<rect x="624" y="304" width="1" height="2" fill="#0000FF"/>
<rect x="746" y="349" width="1" height="2" fill="#FF00FF"/>
<rect x="917" y="403" width="1" height="2" fill="#808080"/>
<text x="248.7" y="212.0" fill="#000" font-size="10.5" textLength="120.2" lengthAdjust="spacingAndGlyphs">Обработать информацию</text>
<text x="242.8" y="225.0" fill="#000" font-size="10.5" textLength="136.4" lengthAdjust="spacingAndGlyphs">о повышении квалификации</text>
<text x="241.6" y="249.8" fill="#000" font-size="10.5" textLength="16.4" lengthAdjust="spacingAndGlyphs">0 р.</text>
<text x="381.4" y="249.8" fill="#000" font-size="10.5" text-anchor="end">1</text>
<text x="399.6" y="303.8" fill="#000" font-size="10.5" textLength="16.4" lengthAdjust="spacingAndGlyphs">0 р.</text>
<text x="529.4" y="303.8" fill="#000" font-size="10.5" text-anchor="end">2</text>
<text x="543.6" y="357.8" fill="#000" font-size="10.5" textLength="16.4" lengthAdjust="spacingAndGlyphs">0 р.</text>
<text x="669.4" y="357.8" fill="#000" font-size="10.5" text-anchor="end">4</text>
<text x="691.6" y="406.8" fill="#000" font-size="10.5" textLength="16.4" lengthAdjust="spacingAndGlyphs">0 р.</text>
<text x="826.4" y="406.8" fill="#000" font-size="10.5" text-anchor="end">5</text>
<text x="853.6" y="460.8" fill="#000" font-size="10.5" textLength="16.4" lengthAdjust="spacingAndGlyphs">0 р.</text>
<text x="993.4" y="460.8" fill="#000" font-size="10.5" text-anchor="end">6</text>
<text x="525.6" y="667.8" fill="#000" font-size="10.5" textLength="16.4" lengthAdjust="spacingAndGlyphs">0 р.</text>
<text x="637.4" y="667.8" fill="#000" font-size="10.5" text-anchor="end">3</text>
<text x="248.7" y="212.0" fill="#000" font-size="10.5" textLength="120.2" lengthAdjust="spacingAndGlyphs">Обработать информацию</text>
<text x="242.8" y="225.0" fill="#000" font-size="10.5" textLength="136.4" lengthAdjust="spacingAndGlyphs">о повышении квалификации</text>
<text x="401.1" y="261.0" fill="#000" font-size="10.5" textLength="120.5" lengthAdjust="spacingAndGlyphs">Обработать информацию</text>
<text x="413.3" y="274.5" fill="#000" font-size="10.5" textLength="100.2" lengthAdjust="spacingAndGlyphs">о профессиональной</text>
<text x="425.8" y="288.0" fill="#000" font-size="10.5" textLength="75.2" lengthAdjust="spacingAndGlyphs">переподготовке</text>
<text x="542.8" y="323.0" fill="#000" font-size="10.5" textLength="120.3" lengthAdjust="spacingAndGlyphs">Обработать информацию</text>
<text x="571.9" y="336.5" fill="#000" font-size="10.5" textLength="66.4" lengthAdjust="spacingAndGlyphs">об аттестации</text>
<text x="698.5" y="364.5" fill="#000" font-size="10.5" textLength="120.1" lengthAdjust="spacingAndGlyphs">Обработать информацию</text>
<text x="720.5" y="378.0" fill="#000" font-size="10.5" textLength="76.4" lengthAdjust="spacingAndGlyphs">о назначениях и</text>
<text x="723.8" y="392.0" fill="#000" font-size="10.5" textLength="68.1" lengthAdjust="spacingAndGlyphs">перемещениях</text>
<text x="862.7" y="425.0" fill="#000" font-size="10.5" textLength="120.1" lengthAdjust="spacingAndGlyphs">Обработать информацию</text>
<text x="881.4" y="438.0" fill="#000" font-size="10.5" textLength="83.0" lengthAdjust="spacingAndGlyphs">о воинском учете</text>
<text x="552.3" y="575.0" fill="#000" font-size="10.5" textLength="53.0" lengthAdjust="spacingAndGlyphs">Обработать</text>
<text x="542.9" y="589.5" fill="#000" font-size="10.5" textLength="74.8" lengthAdjust="spacingAndGlyphs">личные данные</text>
<text x="332.2" y="163.2" fill="#FF0000" font-size="10.5" textLength="64.4" lengthAdjust="spacingAndGlyphs">Сертификат о</text>
<text x="332.2" y="176.9" fill="#FF0000" font-size="10.5" textLength="54.8" lengthAdjust="spacingAndGlyphs">повышении</text>
<text x="332.2" y="189.9" fill="#FF0000" font-size="10.5" textLength="68.3" lengthAdjust="spacingAndGlyphs">квалификации</text>
<text x="159.9" y="195.1" fill="#FF0000" font-size="10.5" textLength="69.8" lengthAdjust="spacingAndGlyphs">Информация о</text>
<text x="159.9" y="208.5" fill="#FF0000" font-size="10.5" textLength="62.1" lengthAdjust="spacingAndGlyphs">повышении</text>
<text x="159.9" y="222.0" fill="#FF0000" font-size="10.5" textLength="68.7" lengthAdjust="spacingAndGlyphs">квалификации</text>
<text x="471.4" y="163.2" fill="#00FF00" font-size="10.5" textLength="64.4" lengthAdjust="spacingAndGlyphs">Сертификат о</text>
<text x="471.4" y="176.6" fill="#00FF00" font-size="10.5" textLength="91.1" lengthAdjust="spacingAndGlyphs">профессиональной</text>
<text x="471.4" y="189.5" fill="#00FF00" font-size="10.5" textLength="75.5" lengthAdjust="spacingAndGlyphs">переподготовке</text>
<text x="635.1" y="163.5" fill="#0000FF" font-size="10.5" textLength="61.2" lengthAdjust="spacingAndGlyphs">Документ об</text>
<text x="635.1" y="177.2" fill="#0000FF" font-size="10.5" textLength="52.7" lengthAdjust="spacingAndGlyphs">аттестации</text>
<text x="752.2" y="163.5" fill="#FF00FF" font-size="10.5" textLength="55.3" lengthAdjust="spacingAndGlyphs">Документ о</text>
<text x="752.2" y="177.0" fill="#FF00FF" font-size="10.5" textLength="67.3" lengthAdjust="spacingAndGlyphs">назначениях и</text>
<text x="752.2" y="190.1" fill="#FF00FF" font-size="10.5" textLength="68.6" lengthAdjust="spacingAndGlyphs">перемещениях</text>
<text x="926.6" y="163.2" fill="#808080" font-size="10.5" textLength="55.1" lengthAdjust="spacingAndGlyphs">Документ о</text>
<text x="926.6" y="177.0" fill="#808080" font-size="10.5" textLength="73.6" lengthAdjust="spacingAndGlyphs">воинском учете</text>
<text x="979.1" y="203.9" fill="#FF0000" font-size="10.5" textLength="95.2" lengthAdjust="spacingAndGlyphs">Отчет о повышении</text>
<text x="979.1" y="218.2" fill="#FF0000" font-size="10.5" textLength="68.2" lengthAdjust="spacingAndGlyphs">квалификации</text>
<text x="159.2" y="278.8" fill="#26BF26" font-size="10.5" textLength="164.8" lengthAdjust="spacingAndGlyphs">Информация о профессиональной</text>
<text x="159.2" y="292.7" fill="#26BF26" font-size="10.5" textLength="75.4" lengthAdjust="spacingAndGlyphs">переподготовке</text>
<text x="977.2" y="257.9" fill="#26BF26" font-size="10.5" textLength="131.8" lengthAdjust="spacingAndGlyphs">Отчет о профессиональной</text>
<text x="977.2" y="271.9" fill="#26BF26" font-size="10.5" textLength="75.9" lengthAdjust="spacingAndGlyphs">переподготовке</text>
<text x="165.0" y="320.0" fill="#0000FF" font-size="10.5" textLength="74.4" lengthAdjust="spacingAndGlyphs">Информация об</text>
<text x="165.0" y="332.7" fill="#0000FF" font-size="10.5" textLength="52.7" lengthAdjust="spacingAndGlyphs">аттестации</text>
<text x="975.4" y="310.7" fill="#0000FF" font-size="10.5" textLength="41.2" lengthAdjust="spacingAndGlyphs">Отчет об</text>
<text x="975.4" y="323.5" fill="#0000FF" font-size="10.5" textLength="52.6" lengthAdjust="spacingAndGlyphs">аттетсации</text>
<text x="165.0" y="373.5" fill="#FF00FF" font-size="10.5" textLength="140.8" lengthAdjust="spacingAndGlyphs">Информация о назначениях и</text>
<text x="165.0" y="386.5" fill="#FF00FF" font-size="10.5" textLength="68.7" lengthAdjust="spacingAndGlyphs">перемещениях</text>
<text x="1002.3" y="359.5" fill="#FF00FF" font-size="10.5" textLength="107.4" lengthAdjust="spacingAndGlyphs">Отчет о назначениях и</text>
<text x="1002.3" y="373.4" fill="#FF00FF" font-size="10.5" textLength="68.4" lengthAdjust="spacingAndGlyphs">перемещениях</text>
<text x="165.1" y="432.0" fill="#808080" font-size="10.5" textLength="146.7" lengthAdjust="spacingAndGlyphs">Информация о воинском учете</text>
<text x="998.7" y="431.5" fill="#808080" font-size="10.5" textLength="113.6" lengthAdjust="spacingAndGlyphs">Отчет о воинском учете</text>
<text x="165.0" y="522.1" fill="#20A8A8" font-size="10.5" textLength="150.0" lengthAdjust="spacingAndGlyphs">Информация о личных данных</text>
<text x="165.0" y="540.2" fill="#20A8A8" font-size="10.5" textLength="128.0" lengthAdjust="spacingAndGlyphs">Информация о взысканиях</text>
<text x="165.0" y="558.2" fill="#20A8A8" font-size="10.5" textLength="136.8" lengthAdjust="spacingAndGlyphs">Информация об образовании</text>
<text x="165.0" y="576.4" fill="#20A8A8" font-size="10.5" textLength="115.3" lengthAdjust="spacingAndGlyphs">Информация об отпуске</text>
<text x="165.0" y="594.0" fill="#20A8A8" font-size="10.5" textLength="136.8" lengthAdjust="spacingAndGlyphs">Информация о стаже работы</text>
<text x="165.0" y="609.0" fill="#20A8A8" font-size="10.5" textLength="99.9" lengthAdjust="spacingAndGlyphs">Информация о семье</text>
<text x="165.0" y="629.8" fill="#20A8A8" font-size="10.5" textLength="131.8" lengthAdjust="spacingAndGlyphs">Информация о поощрениях</text>
<text x="165.0" y="647.9" fill="#20A8A8" font-size="10.5" textLength="197.0" lengthAdjust="spacingAndGlyphs">Информация об увольнении сотрудников</text>
<text x="655.4" y="518.6" fill="#20A8A8" font-size="10.5" textLength="116.5" lengthAdjust="spacingAndGlyphs">Отчет о личных данных</text>
<text x="655.4" y="536.9" fill="#20A8A8" font-size="10.5" textLength="94.5" lengthAdjust="spacingAndGlyphs">Отчет о взысканиях</text>
<text x="654.3" y="554.5" fill="#20A8A8" font-size="10.5" textLength="103.3" lengthAdjust="spacingAndGlyphs">Отчет об образовании</text>
<text x="653.6" y="573.6" fill="#20A8A8" font-size="10.5" textLength="81.4" lengthAdjust="spacingAndGlyphs">Отчет об отпуске</text>
<text x="652.7" y="590.7" fill="#20A8A8" font-size="10.5" textLength="103.3" lengthAdjust="spacingAndGlyphs">Отчет о стаже работы</text>
<text x="652.7" y="608.7" fill="#20A8A8" font-size="10.5" textLength="66.0" lengthAdjust="spacingAndGlyphs">Отчет о семье</text>
<text x="652.7" y="625.9" fill="#20A8A8" font-size="10.5" textLength="98.3" lengthAdjust="spacingAndGlyphs">Отчет о поощрениях</text>
<text x="649.9" y="644.6" fill="#20A8A8" font-size="10.5" textLength="162.6" lengthAdjust="spacingAndGlyphs">Отчет об увольнении сотрудников</text>
</g></svg>
</body></html>
